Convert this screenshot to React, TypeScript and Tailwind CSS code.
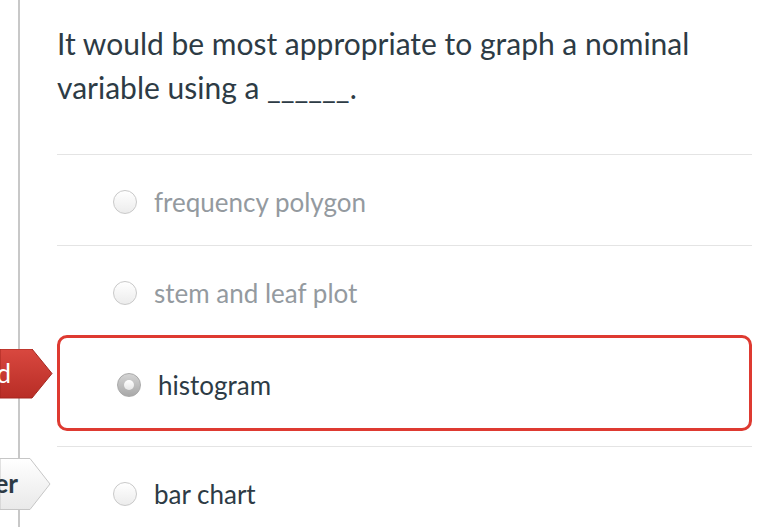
import React from "react";

const font = { fontFamily: "Lato, 'Open Sans', sans-serif" };

function Radio({ checked = false }: { checked?: boolean }) {
  if (checked) {
    return (
      <span className="flex h-[24px] w-[24px] shrink-0 items-center justify-center rounded-full border border-[#a9a9a9] bg-gradient-to-b from-[#d4d4d4] to-[#a8a8a8]">
        <span className="h-[10px] w-[10px] rounded-full bg-gradient-to-b from-[#ffffff] to-[#e6e6e6]" />
      </span>
    );
  }
  return (
    <span className="h-[24px] w-[24px] shrink-0 rounded-full border border-[#c9c9c9] bg-gradient-to-b from-[#ffffff] to-[#ececec]" />
  );
}

function Option({ label, muted = false }: { label: string; muted?: boolean }) {
  return (
    <div className="flex h-[90px] items-center gap-[17px] pl-[56px] pt-[3px]">
      <Radio />
      <span className={`pt-[1px] text-[26px] ${muted ? "text-[#949a9f]" : "text-[#2d3b45]"}`}>{label}</span>
    </div>
  );
}

export default function App() {
  return (
    <div className="relative flex h-[527px] w-[761px] overflow-hidden bg-white" style={font}>
      {/* left rail */}
      <div className="flex w-[57px] shrink-0">
        <div className="ml-[18px] h-full w-[2px] bg-[#c8c8c8]" />
      </div>

      {/* answer tags */}
      <div className="absolute left-0 top-[349px] h-[50px] w-[53px] overflow-hidden">
        <svg width="53" height="50" className="absolute inset-0">
          <defs>
            <linearGradient id="red" x1="0" y1="0" x2="0" y2="1">
              <stop offset="0" stopColor="#d9483f" />
              <stop offset="1" stopColor="#b82d26" />
            </linearGradient>
          </defs>
          <polygon points="0,0 32,0 52,24.5 32,49 0,49" fill="url(#red)" stroke="#a5271f" strokeWidth="1" />
        </svg>
        <span className="absolute right-[42px] top-[9px] whitespace-nowrap text-[26px] leading-[30px] text-white">d</span>
      </div>
      <div className="absolute left-0 top-[458px] h-[53px] w-[52px] overflow-hidden">
        <svg width="52" height="53" className="absolute inset-0">
          <defs>
            <linearGradient id="wht" x1="0" y1="0" x2="0" y2="1">
              <stop offset="0" stopColor="#ffffff" />
              <stop offset="1" stopColor="#e9e9e9" />
            </linearGradient>
          </defs>
          <polygon points="0,0.5 30,0.5 50,26 30,51.5 0,51.5" fill="url(#wht)" stroke="#c6c6c6" strokeWidth="1" />
        </svg>
        <span className="absolute right-[34px] top-[10px] whitespace-nowrap text-[26px] font-bold leading-[30px] text-[#2d3b45]">er</span>
      </div>

      {/* content */}
      <div className="mr-[9px] flex-1">
        <p className="pt-[21px] text-[30px] leading-[44px] text-[#2d3b45]">
          It would be most appropriate to graph a nominal variable using a ______.
        </p>
        <div className="mt-[45px] border-t border-[#e4e4e4]">
          <Option label="frequency polygon" muted />
        </div>
        <div className="border-t border-[#e4e4e4]">
          <Option label="stem and leaf plot" muted />
        </div>
        <div className="-mt-[1px] flex h-[96px] items-center gap-[17px] rounded-[10px] border-[3px] border-[#de3a31] pl-[57px] pt-[3px]">
          <Radio checked />
          <span className="pt-[1px] text-[26px] text-[#2d3b45]">histogram</span>
        </div>
        <div className="mt-[15px] border-t border-[#e4e4e4]">
          <Option label="bar chart" />
        </div>
      </div>
    </div>
  );
}
